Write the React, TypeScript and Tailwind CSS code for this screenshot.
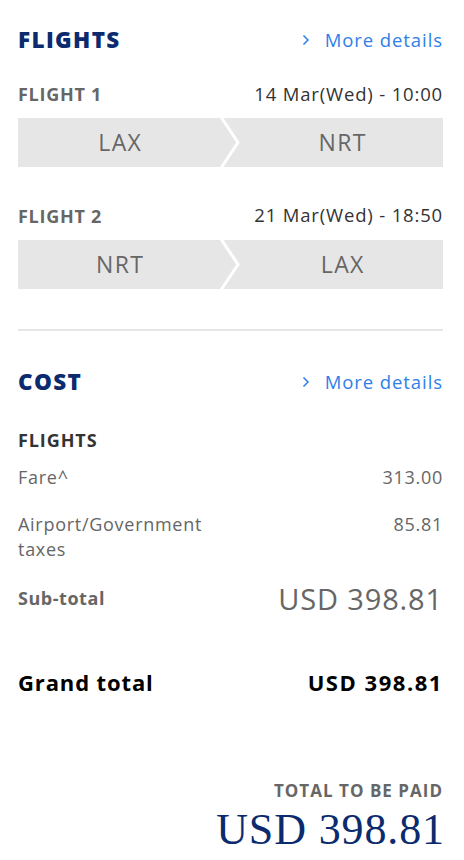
import React from 'react';

const font = { fontFamily: '"Open Sans", Lato, sans-serif' };

function Chevron() {
  return (
    <svg width="10" height="14" viewBox="0 0 10 14" className="mr-[14px]">
      <path d="M2.5 2.5 L7 7 L2.5 11.5" fill="none" stroke="#2f7fe8" strokeWidth="1.5" />
    </svg>
  );
}

function SectionHeader({ title }: { title: string }) {
  return (
    <div className="flex items-center justify-between">
      <h2 className="text-[22.5px] font-extrabold text-[#0b2b6e] leading-none tracking-[0.06em]">{title}</h2>
      <a className="flex items-center text-[18.5px] text-[#2f7fe8] leading-none tracking-[0.05em]">
        <Chevron />
        More details
      </a>
    </div>
  );
}

function Route({ label, date, from, to }: { label: string; date: string; from: string; to: string }) {
  return (
    <div>
      <div className="flex items-end justify-between">
        <span className="text-[18px] font-bold text-[#666666] leading-none tracking-[0.04em]">{label}</span>
        <span className="text-[18.5px] text-[#333333] leading-none tracking-[0.045em]">{date}</span>
      </div>
      <div className="relative mt-[15px] grid h-[49px] grid-cols-2 bg-[#e6e6e6] text-[23px] text-[#666666] tracking-[0.06em]">
        <div className="flex items-center justify-center pr-2">{from}</div>
        <div className="flex items-center justify-center pl-3">{to}</div>
        <svg
          className="absolute left-1/2 top-0 -translate-x-1/2"
          width="24"
          height="49"
          viewBox="0 0 24 49"
        >
          <path d="M2 -1 L19 24.5 L2 50" fill="none" stroke="#ffffff" strokeWidth="3" />
        </svg>
      </div>
    </div>
  );
}

function Row({ label, value }: { label: React.ReactNode; value: string }) {
  return (
    <div className="flex items-start justify-between text-[18px] leading-[25px] text-[#666666] tracking-[0.04em]">
      <span className="max-w-[210px]">{label}</span>
      <span>{value}</span>
    </div>
  );
}

export default function App() {
  return (
    <div className="min-h-[860px] bg-white pl-[18px] pr-[21px] pt-[29px]" style={font}>
      <SectionHeader title="FLIGHTS" />

      <div className="mt-[33px]">
        <Route label="FLIGHT 1" date="14 Mar(Wed) - 10:00" from="LAX" to="NRT" />
      </div>
      <div className="mt-[39px]">
        <Route label="FLIGHT 2" date="21 Mar(Wed) - 18:50" from="NRT" to="LAX" />
      </div>

      <div className="mt-[40px] h-[2px] bg-[#e6e6e6]" />

      <div className="mt-[40px]">
        <SectionHeader title="COST" />
      </div>

      <div className="mt-[38px] text-[18px] font-bold text-[#333333] leading-none tracking-[0.05em]">
        FLIGHTS
      </div>

      <div className="mt-[16px] flex flex-col gap-[22px]">
        <Row label="Fare^" value="313.00" />
        <Row label="Airport/Government taxes" value="85.81" />
      </div>

      <div className="mt-[22px] flex items-center justify-between">
        <span className="text-[18px] font-bold text-[#666666] tracking-[0.03em]">Sub-total</span>
        <span className="text-[29px] text-[#666666] leading-none tracking-[0.03em]">USD 398.81</span>
      </div>

      <div className="mt-[53px] flex items-center justify-between text-[22px] font-bold text-black tracking-[0.04em]">
        <span>Grand total</span>
        <span className="tracking-[0.07em]">USD 398.81</span>
      </div>

      <div className="mt-[83px] flex flex-col items-end">
        <span className="text-[17px] font-bold text-[#666666] leading-none tracking-[0.06em]">
          TOTAL TO BE PAID
        </span>
        <span
          className="mt-[9px] text-[44px] leading-none text-[#0b2b6e] tracking-[0.02em] -mr-[2px]"
          style={{ fontFamily: '"Liberation Serif", serif' }}
        >
          USD 398.81
        </span>
      </div>
    </div>
  );
}
